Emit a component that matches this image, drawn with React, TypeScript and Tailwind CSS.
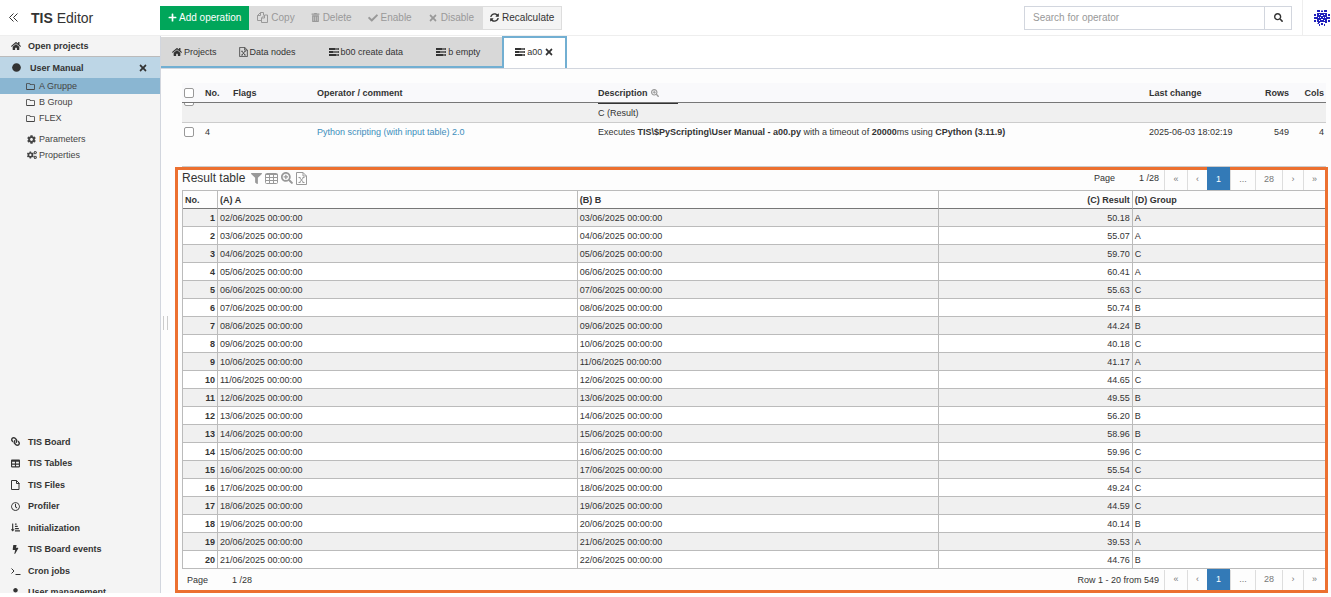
import type { ReactNode } from "react";
import {
  FaBolt,
  FaCheck,
  FaCircle,
  FaCog,
  FaCogs,
  FaFilter,
  FaHome,
  FaLink,
  FaPlus,
  FaRegClock,
  FaRegFolder,
  FaSearch,
  FaSearchPlus,
  FaSortAmountDownAlt,
  FaSyncAlt,
  FaTable,
  FaTimes,
  FaTrashAlt,
  FaUser,
} from "react-icons/fa";

const results = [
  ["50.18", "A"],
  ["55.07", "A"],
  ["59.70", "C"],
  ["60.41", "A"],
  ["55.63", "C"],
  ["50.74", "B"],
  ["44.24", "B"],
  ["40.18", "C"],
  ["41.17", "A"],
  ["44.65", "C"],
  ["49.55", "B"],
  ["56.20", "B"],
  ["58.96", "B"],
  ["59.96", "C"],
  ["55.54", "C"],
  ["49.24", "C"],
  ["44.59", "C"],
  ["40.14", "B"],
  ["39.53", "A"],
  ["44.76", "B"],
];

const tools = [
  { label: "Copy", icon: <CopyIcon /> },
  { label: "Delete", icon: <FaTrashAlt size={9} /> },
  { label: "Enable", icon: <FaCheck size={10} /> },
  { label: "Disable", icon: <FaTimes size={10} /> },
];

const modules = [
  { label: "TIS Board", icon: <FaLink size={9} className="-scale-x-100" /> },
  { label: "TIS Tables", icon: <FaTable size={9} /> },
  { label: "TIS Files", icon: <FileIcon /> },
  { label: "Profiler", icon: <FaRegClock size={9} /> },
  { label: "Initialization", icon: <FaSortAmountDownAlt size={9} /> },
  { label: "TIS Board events", icon: <FaBolt size={9} /> },
  { label: "Cron jobs", icon: <PromptIcon /> },
  { label: "User management", icon: <FaUser size={9} /> },
];

const day = (n: number) => `${String(n).padStart(2, "0")}/06/2025 00:00:00`;

function GridIcon() {
  return (
    <svg
      viewBox="0 0 13 11"
      className="h-[11px] w-[13px]"
      fill="none"
      stroke="currentColor"
      aria-hidden="true"
    >
      <rect x="0.5" y="0.5" width="12" height="10" rx="1" />
      <path d="M0.5 1.5h12M0.5 4.5h12M0.5 7.5h12M4.5 1v9.5M8.5 1v9.5" />
    </svg>
  );
}

function CopyIcon() {
  return (
    <svg viewBox="0 0 11 11" className="size-[11px]" fill="none" stroke="currentColor" aria-hidden="true">
      <path d="M4.5 8.5h-4v-5l3-3h3v2.5M0.5 3.5h3v-3" />
      <path d="M7.5 3h3v7.5h-6V6zM4.5 6h3V3" />
    </svg>
  );
}

function FileIcon() {
  return (
    <svg viewBox="0 0 9 10" className="h-2.5 w-[9px]" fill="none" stroke="currentColor" aria-hidden="true">
      <path d="M0.5 0.5h5l2.5 2.5v6.5h-7.5zM5.5 0.5v3h3" />
    </svg>
  );
}

function SheetIcon({ className }: { className: string }) {
  return (
    <svg viewBox="0 0 11 13" className={className} fill="none" stroke="currentColor" aria-hidden="true">
      <path d="M0.5 0.5h6.5l3.5 3.5v8.5h-10zM7 0.5v3.5h3.5" />
      <path d="M3.5 5.5l4 5M7.5 5.5l-4 5M2.5 5.5h2M6.5 5.5h2M2.5 10.5h2M6.5 10.5h2" />
    </svg>
  );
}

function PromptIcon() {
  return (
    <svg viewBox="0 0 10 8" className="h-2 w-2.5" fill="none" stroke="currentColor" aria-hidden="true">
      <path d="M0.5 1.5l2.5 2.5-2.5 2.5M4.5 7.5h5" />
    </svg>
  );
}

function TasksIcon() {
  return (
    <svg viewBox="0 0 10 8" className="h-2 w-2.5" fill="currentColor" aria-hidden="true">
      <path d="M0 0h10v2H0zM0 3h10v2H0zM0 6h10v2H0z" />
      <path d="M6 0.5h3.5v1H6zM4 3.5h5.5v1H4zM7 6.5h2.5v1H7z" fill="#aaa" />
    </svg>
  );
}

function Identicon() {
  return (
    <svg viewBox="0 0 16 16" className="size-4" fill="#2020bb" aria-hidden="true">
      <path d="M3 0h3v2H3zM10 0h3v2h-3zM7 1l1-1 1 1v1H7zM0 4h2v2H0zM14 4h2v2h-2zM0 10h2v2H0zM14 10h2v2h-2zM0 7h3v2H0zM13 7h3v2h-3zM3 13h1v-1h2v1H5v1H4zM12 13h1v-1h-2v1h1zM5 14h1v2H5zM10 14h1v2h-1zM7 13h2v2H7z" />
      <path
        fillRule="evenodd"
        d="M3 3h10v9H3zM5 4v1h1V4zM10 4v1h1V4zM7 5v1h2V5zM4 7v1h1V7zM11 7v1h1V7zM6 7v1h1V7zM9 7v1h1V7zM7 9v1h2V9zM5 10v1h1v-1zM10 10v1h1v-1z"
      />
    </svg>
  );
}

function Sidebar() {
  return (
    <aside className="flex w-[161px] shrink-0 flex-col overflow-hidden border-r border-[#d2d6de] bg-[#f4f4f4]">
      <a
        href="#projects"
        className="flex h-[21px] shrink-0 items-center border-b border-[#bbb] pl-[11px] font-bold"
      >
        <span className="w-[17px]">
          <FaHome size={10} />
        </span>
        Open projects
      </a>
      <div className="flex h-[21px] shrink-0 items-center bg-[#bdd6e6] pr-3 pl-3 font-bold">
        <span className="w-[18px]">
          <FaCircle size={9} />
        </span>
        <a href="#manual" className="flex-1">
          User Manual
        </a>
        <button aria-label="Close project">
          <FaTimes size={10} />
        </button>
      </div>
      <nav className="text-[#444]">
        {["A Gruppe", "B Group", "FLEX"].map((name, i) => (
          <a
            key={name}
            href="#folder"
            className={`flex h-4 items-center gap-1 pl-[26px] ${i === 0 ? "bg-[#8ab6d2]" : ""}`}
          >
            <FaRegFolder size={9} />
            {name}
          </a>
        ))}
        <div className="mt-[5px]">
          <a href="#parameters" className="flex h-4 items-center gap-[3px] pl-[27px]">
            <FaCog size={9} />
            Parameters
          </a>
          <a href="#properties" className="flex h-4 items-center gap-0.5 pl-[27px]">
            <FaCogs size={10} />
            Properties
          </a>
        </div>
      </nav>
      <nav className="mt-auto -mb-2.5 grid h-[172px] shrink-0 auto-rows-fr font-bold">
        {modules.map((item) => (
          <a key={item.label} href="#module" className="flex items-center pl-[11px]">
            <span className="w-[17px]">{item.icon}</span>
            {item.label}
          </a>
        ))}
      </nav>
    </aside>
  );
}

function Header() {
  return (
    <header className="flex h-9 shrink-0 items-center border-b border-[#eee] bg-white">
      <div className="flex w-40 items-center pl-[9px]">
        <button aria-label="Collapse menu" className="w-[22px]">
          <svg viewBox="0 0 9 9" className="size-[9px]" fill="none" stroke="currentColor">
            <path d="M4.5 0.5l-4 4 4 4M8.5 0.5l-4 4 4 4" />
          </svg>
        </button>
        <h1 className="text-[14px]">
          <b>TIS</b> Editor
        </h1>
      </div>
      <div className="flex h-6 text-[10px]">
        <button className="flex items-center gap-0.5 bg-[#00a65a] px-2 text-white">
          <FaPlus size={9} />
          Add operation
        </button>
        {tools.map((tool) => (
          <button
            key={tool.label}
            disabled
            className="flex items-center gap-[3px] bg-[#ddd] px-2 text-[#999]"
          >
            {tool.icon}
            {tool.label}
          </button>
        ))}
        <button className="flex items-center gap-[3px] border border-[#ddd] bg-[#f4f4f4] px-[7px]">
          <FaSyncAlt size={9} />
          Recalculate
        </button>
      </div>
      <form className="ml-auto flex h-6 text-[10px]">
        <input
          type="text"
          aria-label="Search for operator"
          placeholder="Search for operator"
          className="w-[241px] border border-[#d2d6de] px-2 placeholder:text-[#999]"
        />
        <button
          type="button"
          aria-label="Search"
          className="flex w-[27px] items-center justify-center border border-l-0 border-[#d2d6de]"
        >
          <FaSearch size={9} />
        </button>
      </form>
      <div className="ml-2.5 flex h-full w-[29px] items-center justify-end border-l border-[#eee] pr-px">
        <Identicon />
      </div>
    </header>
  );
}

function Tab({ icon, children }: { icon: ReactNode; children: string }) {
  return (
    <button
      role="tab"
      aria-selected={false}
      className="flex items-center gap-0.5 px-[11px] not-first:pr-[22px]"
    >
      {icon}
      {children}
    </button>
  );
}

function Tabs() {
  return (
    <div role="tablist" className="flex h-[33px] shrink-0 items-end border-b border-[#d2d6de] bg-white">
      <div className="flex h-[31px] border-b-2 border-[#72afd2] bg-[#d8d8d8]">
        <Tab icon={<FaHome size={10} />}>Projects</Tab>
        <Tab icon={<SheetIcon className="h-2.5 w-[9px]" />}>Data nodes</Tab>
        <Tab icon={<TasksIcon />}>b00 create data</Tab>
        <Tab icon={<TasksIcon />}>b empty</Tab>
      </div>
      <button
        role="tab"
        aria-selected
        className="flex h-full items-center gap-0.5 border-2 border-b-0 border-[#72afd2] bg-white px-[11px] pb-0.5"
      >
        <TasksIcon />
        a00
        <FaTimes size={10} />
      </button>
    </div>
  );
}

function Checkbox({ label }: { label: string }) {
  return (
    <input
      type="checkbox"
      aria-label={label}
      className="ml-0.5 block size-2.5 shrink-0 appearance-none rounded-xs border border-[#999] bg-white"
    />
  );
}

function Operators() {
  return (
    <table className="w-full table-fixed border-separate border-spacing-0 text-left">
      <colgroup>
        <col className="w-[23px]" />
        <col className="w-7" />
        <col className="w-[84px]" />
        <col className="w-[281px]" />
        <col />
        <col className="w-24" />
        <col className="w-11" />
        <col className="w-[37px]" />
      </colgroup>
      <thead>
        <tr className="h-5 bg-[#f9f9fb] [&>th]:border-b [&>th]:border-[#777]">
          <th>
            <Checkbox label="Select all" />
          </th>
          <th>No.</th>
          <th>Flags</th>
          <th>Operator / comment</th>
          <th>
            <span className="flex items-center gap-[3px]">
              Description <FaSearchPlus size={8} className="text-[#999]" />
            </span>
          </th>
          <th>Last change</th>
          <th className="text-right">Rows</th>
          <th className="pr-0.5 text-right">Cols</th>
        </tr>
      </thead>
      <tbody>
        <tr className="h-[19px] bg-[#f0f0f0] [&>td]:border-b [&>td]:border-[#ccc]">
          <td className="align-top">
            {/* scrolled under the header, only the lower edge shows */}
            <div className="flex h-[3px] items-end overflow-hidden">
              <Checkbox label="Select row 3" />
            </div>
          </td>
          <td colSpan={3} />
          <td className="align-top">
            <div className="h-px w-20 bg-[#333]" />
            <div className="leading-[18px]">C (Result)</div>
          </td>
          <td colSpan={3} />
        </tr>
        <tr className="h-11 align-top leading-[18px] [&>td]:border-b [&>td]:border-[#ccc]">
          <td className="pt-1">
            <Checkbox label="Select row 4" />
          </td>
          <td>4</td>
          <td />
          <td>
            <a href="#operator" className="text-[#3c8dbc]">
              Python scripting (with input table) 2.0
            </a>
          </td>
          <td>
            Executes <b>TIS\$PyScripting\User Manual - a00.py</b> with a timeout of{" "}
            <b>20000</b>ms using <b>CPython (3.11.9)</b>
          </td>
          <td>2025-06-03 18:02:19</td>
          <td className="text-right">549</td>
          <td className="pr-0.5 text-right">4</td>
        </tr>
      </tbody>
    </table>
  );
}

function Pagination() {
  const item = "h-5 border-l border-[#ddd] pb-0.5 text-[#777]";
  return (
    <div className="ml-[5px] flex items-end">
      <button className={`${item} w-[23px]`}>«</button>
      <button className={`${item} w-5`}>‹</button>
      <button aria-current="page" className="h-[23px] w-[23px] bg-[#337ab7] text-white">
        1
      </button>
      <span className={`${item} flex w-[25px] items-center justify-center`}>...</span>
      <button className={`${item} w-[27px]`}>28</button>
      <button className={`${item} w-[21px]`}>›</button>
      <button className={`${item} w-[22px]`}>»</button>
    </div>
  );
}

function ResultTable() {
  return (
    <section className="mr-[3px] border-3 border-[#ec7030] pl-1">
      <div className="flex h-5 items-end leading-4">
        <h2 className="self-start text-[12px]">Result table</h2>
        <div className="ml-1.5 flex h-4 items-center gap-[3px] self-start text-[#999]">
          <button aria-label="Filter">
            <FaFilter size={11} />
          </button>
          <button aria-label="Columns">
            <GridIcon />
          </button>
          <button aria-label="Zoom in">
            <FaSearchPlus size={12} />
          </button>
          <button aria-label="Export">
            <SheetIcon className="h-[13px] w-[11px]" />
          </button>
        </div>
        <span className="ml-auto self-start">Page</span>
        <span className="ml-6 self-start">1 /28</span>
        <Pagination />
      </div>
      <table className="w-full table-fixed border-separate border-spacing-0 border-t border-l border-[#bbb] text-left">
        <colgroup>
          <col className="w-[35px]" />
          <col className="w-[31.5%]" />
          <col className="w-[31.6%]" />
          <col className="w-[17%]" />
          <col />
        </colgroup>
        <thead>
          <tr className="h-[18px] [&>th]:border-r [&>th]:border-b [&>th]:border-[#bbb] [&>th]:border-b-[#777] [&>th]:px-0.5 [&>th:last-child]:border-r-0">
            <th>No.</th>
            <th>(A) A</th>
            <th>(B) B</th>
            <th className="text-right">(C) Result</th>
            <th>(D) Group</th>
          </tr>
        </thead>
        <tbody>
          {results.map(([value, group], i) => (
            <tr
              key={i}
              className="h-[18px] odd:bg-[#f0f0f0] even:bg-white [&>*]:border-r [&>*]:border-b [&>*]:border-[#bbb] [&>*]:px-0.5 [&>*:last-child]:border-r-0"
            >
              <th className="text-right">{i + 1}</th>
              <td>{day(i + 2)}</td>
              <td>{day(i + 3)}</td>
              <td className="text-right">{value}</td>
              <td>{group}</td>
            </tr>
          ))}
        </tbody>
      </table>
      <div className="flex h-[21px] items-end overflow-hidden">
        <span className="ml-[5px] self-center">Page</span>
        <span className="ml-6 self-center">1 /28</span>
        <span className="ml-auto self-center">Row 1 - 20 from 549</span>
        <Pagination />
      </div>
    </section>
  );
}

export default function App() {
  return (
    <div className="flex h-screen flex-col overflow-hidden bg-white pb-1 font-['Liberation_Sans',Arial,sans-serif] text-[9px] leading-3 text-[#333]">
      <Header />
      <div className="flex min-h-0 flex-1">
        <Sidebar />
        <main className="flex min-w-0 flex-1 flex-col bg-[#fdfdfd]">
          <Tabs />
          <div className="flex min-h-0 flex-1">
            <div className="flex w-3.5 shrink-0 items-center pb-4 pl-0.5">
              <div className="h-3.5 w-[5px] border-x border-[#ccc]" />
            </div>
            <div className="min-w-0 flex-1 pt-3.5">
              <div className="pr-[5px] pl-[7px]">
                <Operators />
              </div>
              <ResultTable />
            </div>
          </div>
        </main>
      </div>
    </div>
  );
}
